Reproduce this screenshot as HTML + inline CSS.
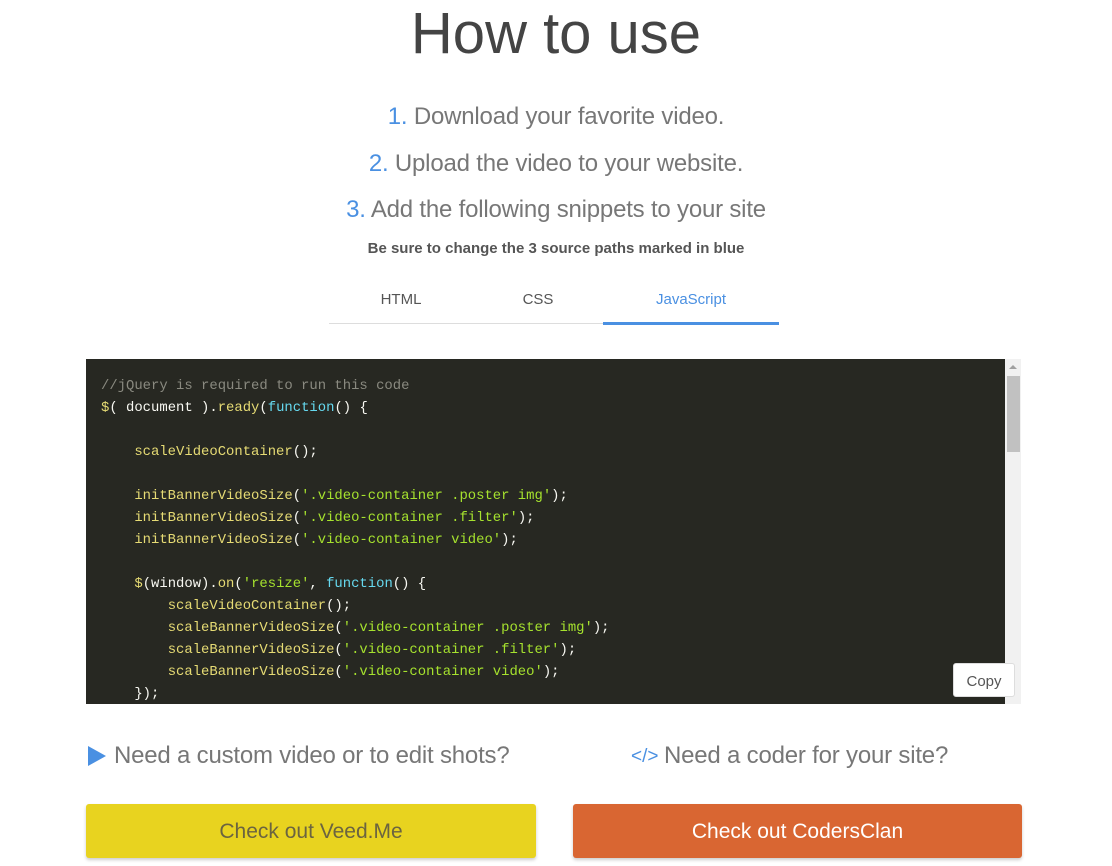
<!DOCTYPE html>
<html><head><meta charset="utf-8"><style>
*{margin:0;padding:0;box-sizing:border-box}
body{width:1112px;height:866px;background:#fff;font-family:"Liberation Sans",sans-serif;position:relative;overflow:hidden}
.a{position:absolute;white-space:nowrap}
.c{left:0;width:1112px;text-align:center}
h1{font-weight:300;font-size:58px;color:#444;top:1px;line-height:66px}
.li{font-size:24px;color:#777;font-weight:300;letter-spacing:-0.2px}
.li b{color:#4a90e2;font-weight:400}
.tab{top:291px;font-size:15px;color:#555;text-align:center;width:176px}
pre{position:absolute;left:86px;top:359px;width:919px;height:345px;background:#272822;color:#f8f8f2;font-family:"Liberation Mono",monospace;font-size:13.9px;line-height:22px;padding:16px 0 0 15px;overflow:hidden}
.cm{color:#8a8a80}.y{color:#e6db74}.k{color:#66d9ef}.g{color:#a6e22e}
.btn{top:804px;height:54px;border-radius:3px;font-size:21px;text-align:center;line-height:56px;box-shadow:0 2px 3px rgba(0,0,0,.2)}
</style></head><body>
<h1 class="a c">How to use</h1>
<div class="a c li" style="top:103px">
<b>1.</b> Download your favorite video.</div>
<div class="a c li" style="top:150px"><b>2.</b> Upload the video to your website.</div>
<div class="a c li" style="top:196px"><b>3.</b> Add the following snippets to your site</div>
<div class="a c" style="top:240px;font-size:15px;font-weight:bold;color:#555">Be sure to change the 3 source paths marked in blue</div>
<div class="a tab" style="left:313px">HTML</div>
<div class="a tab" style="left:450px">CSS</div>
<div class="a tab" style="left:603px;color:#4a90e2">JavaScript</div>
<div class="a" style="left:329px;top:323px;width:450px;height:1px;background:#ddd"></div>
<div class="a" style="left:603px;top:322px;width:176px;height:3px;background:#4a90e2"></div>
<pre><span class="cm">//jQuery is required to run this code</span>
<span class="y">$</span>( document ).<span class="y">ready</span>(<span class="k">function</span>() {

    <span class="y">scaleVideoContainer</span>();

    <span class="y">initBannerVideoSize</span>(<span class="g">'.video-container .poster img'</span>);
    <span class="y">initBannerVideoSize</span>(<span class="g">'.video-container .filter'</span>);
    <span class="y">initBannerVideoSize</span>(<span class="g">'.video-container video'</span>);

    <span class="y">$</span>(window).<span class="y">on</span>(<span class="g">'resize'</span>, <span class="k">function</span>() {
        <span class="y">scaleVideoContainer</span>();
        <span class="y">scaleBannerVideoSize</span>(<span class="g">'.video-container .poster img'</span>);
        <span class="y">scaleBannerVideoSize</span>(<span class="g">'.video-container .filter'</span>);
        <span class="y">scaleBannerVideoSize</span>(<span class="g">'.video-container video'</span>);
    });</pre>
<div class="a" style="left:1005px;top:359px;width:16px;height:345px;background:#f1f1f1"></div>
<div class="a" style="left:1007px;top:376px;width:13px;height:76px;background:#c1c1c1"></div>
<div class="a" style="left:1009px;top:365px;width:0;height:0;border-left:4px solid transparent;border-right:4px solid transparent;border-bottom:4px solid #a0a0a0"></div>
<div class="a" style="left:953px;top:663px;width:62px;height:34px;background:#fff;border-radius:3px;border:1px solid #ddd;font-size:15px;color:#555;text-align:center;line-height:36px">Copy</div>
<div class="a" style="left:88px;top:746px;width:0;height:0;border-top:10px solid transparent;border-bottom:10px solid transparent;border-left:18px solid #4a90e2"></div>
<div class="a li" style="left:114px;top:742px">Need a custom video or to edit shots?</div>
<div class="a" style="left:631px;top:746px;color:#4a90e2;font-size:19px">&lt;/&gt;</div>
<div class="a li" style="left:664px;top:742px">Need a coder for your site?</div>
<div class="a btn" style="left:86px;width:450px;background:#e8d31f;color:#6b6440">Check out Veed.Me</div>
<div class="a btn" style="left:573px;width:449px;background:#d96632;color:#fff">Check out CodersClan</div>
</body></html>
